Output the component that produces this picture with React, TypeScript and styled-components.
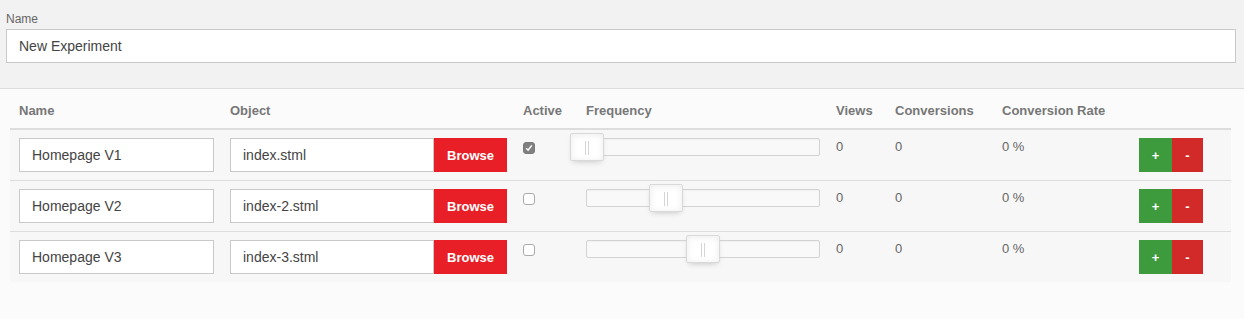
import React, { useState } from "react";
import styled, { createGlobalStyle } from "styled-components";

const GlobalStyle = createGlobalStyle`
  body {
    margin: 0;
    background: #fbfbfb;
    font-family: "Liberation Sans", Arial, Helvetica, sans-serif;
    color: #555;
  }
`;

const Page = styled.div`
  width: 1244px;
  min-height: 319px;
  background: #fbfbfb;
`;

const ExperimentSection = styled.div`
  background: #f2f2f2;
  border-bottom: 1px solid #dcdcdc;
  padding: 11px 8px 25px 6px;
`;

const Label = styled.label`
  display: block;
  font-size: 12px;
  line-height: 16px;
  color: #666;
  margin-bottom: 2px;
`;

const TextInput = styled.input<{ $width?: number }>`
  box-sizing: border-box;
  width: ${(p) => (p.$width ? `${p.$width}px` : "100%")};
  height: 34px;
  padding: 0 12px;
  border: 1px solid #c9c9c9;
  border-radius: 0;
  background: #fff;
  font-family: "Liberation Sans", Arial, sans-serif;
  font-size: 14px;
  color: #444;
  outline: none;
`;

const Table = styled.div`
  margin: 0 13px 0 10px;
`;

const columns = "211px 293px 63px 250px 59px 107px 137px 101px";

const HeaderRow = styled.div`
  display: grid;
  grid-template-columns: ${columns};
  height: 41px;
  align-items: center;
  padding-top: 3px;
  box-sizing: border-box;
  border-bottom: 2px solid #dddddd;
`;

const HeaderCell = styled.div`
  padding-left: 9px;
  font-size: 13px;
  font-weight: bold;
  color: #777;
`;

const Row = styled.div<{ $last?: boolean }>`
  display: grid;
  grid-template-columns: ${columns};
  height: ${(p) => (p.$last ? "50px" : "51px")};
  box-sizing: border-box;
  background: #f7f7f7;
  border-bottom: ${(p) => (p.$last ? "none" : "1px solid #dddddd")};
`;

const Cell = styled.div`
  padding: 8px 0 0 9px;
  font-size: 13px;
  line-height: 16px;
  color: #666;
`;

const TextCell = styled(Cell)`
  padding-top: 9px;
`;

const InputGroup = styled.div`
  display: flex;
`;

const BrowseButton = styled.button`
  width: 73px;
  height: 34px;
  border: none;
  border-radius: 0;
  background: #e81f26;
  color: #fff;
  font-family: "Liberation Sans", Arial, sans-serif;
  font-size: 13px;
  font-weight: bold;
  padding: 0;
  cursor: pointer;
`;

const CheckBox = styled.span<{ $checked: boolean }>`
  display: flex;
  align-items: center;
  justify-content: center;
  width: 12px;
  height: 12px;
  margin-top: 4px;
  box-sizing: border-box;
  border-radius: 3px;
  border: 1px solid ${(p) => (p.$checked ? "#7a7a7a" : "#a9a9a9")};
  background: ${(p) => (p.$checked ? "#808080" : "#fff")};
  cursor: pointer;
`;

const Track = styled.div`
  position: relative;
  width: 234px;
  height: 18px;
  box-sizing: border-box;
  border: 1px solid #d3d3d3;
  border-radius: 2px;
  background: #f9f9f9;
  box-shadow: inset 0 1px 1px #f0f0f0;
`;

const Thumb = styled.div`
  position: absolute;
  top: -6px;
  width: 34px;
  height: 28px;
  margin-left: -17px;
  box-sizing: border-box;
  border: 1px solid #d9d9d9;
  border-radius: 2px;
  background: #fff;
  box-shadow: inset 0 0 1px #fff, inset 0 1px 7px #ebebeb, 0 3px 6px -3px #bbb;
  display: flex;
  justify-content: center;
  gap: 2px;
  padding-top: 7px;

  &::before,
  &::after {
    content: "";
    display: block;
    width: 1px;
    height: 14px;
    background: #d6d6d6;
  }
`;

const ActionGroup = styled.div`
  display: flex;
`;

const ActionButton = styled.button<{ $variant: "add" | "remove" }>`
  height: 34px;
  width: ${(p) => (p.$variant === "add" ? "33px" : "31px")};
  border: none;
  border-radius: 0;
  padding: 0;
  background: ${(p) => (p.$variant === "add" ? "#3e9b3d" : "#d12a29")};
  color: #fff;
  font-family: "Liberation Sans", Arial, sans-serif;
  font-size: 13px;
  font-weight: bold;
  cursor: pointer;
`;

type Variation = {
  name: string;
  object: string;
  active: boolean;
  frequency: number;
  views: number;
  conversions: number;
};

const initial: Variation[] = [
  { name: "Homepage V1", object: "index.stml", active: true, frequency: 0, views: 0, conversions: 0 },
  { name: "Homepage V2", object: "index-2.stml", active: false, frequency: 34, views: 0, conversions: 0 },
  { name: "Homepage V3", object: "index-3.stml", active: false, frequency: 50, views: 0, conversions: 0 },
];

const App: React.FC = () => {
  const [variations, setVariations] = useState<Variation[]>(initial);

  const toggleActive = (index: number) => {
    setVariations((prev) => prev.map((v, i) => (i === index ? { ...v, active: !v.active } : v)));
  };

  return (
    <Page>
      <GlobalStyle />
      <ExperimentSection>
        <Label>Name</Label>
        <TextInput defaultValue="New Experiment" />
      </ExperimentSection>
      <Table>
        <HeaderRow>
          <HeaderCell>Name</HeaderCell>
          <HeaderCell>Object</HeaderCell>
          <HeaderCell>Active</HeaderCell>
          <HeaderCell>Frequency</HeaderCell>
          <HeaderCell>Views</HeaderCell>
          <HeaderCell>Conversions</HeaderCell>
          <HeaderCell>Conversion Rate</HeaderCell>
          <HeaderCell />
        </HeaderRow>
        {variations.map((v, index) => (
          <Row key={index} $last={index === variations.length - 1}>
            <Cell>
              <TextInput $width={195} defaultValue={v.name} />
            </Cell>
            <Cell>
              <InputGroup>
                <TextInput $width={204} defaultValue={v.object} />
                <BrowseButton>Browse</BrowseButton>
              </InputGroup>
            </Cell>
            <Cell>
              <CheckBox $checked={v.active} onClick={() => toggleActive(index)}>
                {v.active && (
                  <svg width="8" height="8" viewBox="0 0 8 8">
                    <path d="M1.2 4.3 L3.1 6.2 L6.8 1.4" fill="none" stroke="#fff" strokeWidth="1.5" />
                  </svg>
                )}
              </CheckBox>
            </Cell>
            <Cell>
              <Track>
                <Thumb style={{ left: `${v.frequency}%` }} />
              </Track>
            </Cell>
            <TextCell>{v.views}</TextCell>
            <TextCell>{v.conversions}</TextCell>
            <TextCell>{v.views ? Math.round((v.conversions / v.views) * 100) : 0} %</TextCell>
            <Cell>
              <ActionGroup>
                <ActionButton $variant="add">+</ActionButton>
                <ActionButton $variant="remove">-</ActionButton>
              </ActionGroup>
            </Cell>
          </Row>
        ))}
      </Table>
    </Page>
  );
};

export default App;
